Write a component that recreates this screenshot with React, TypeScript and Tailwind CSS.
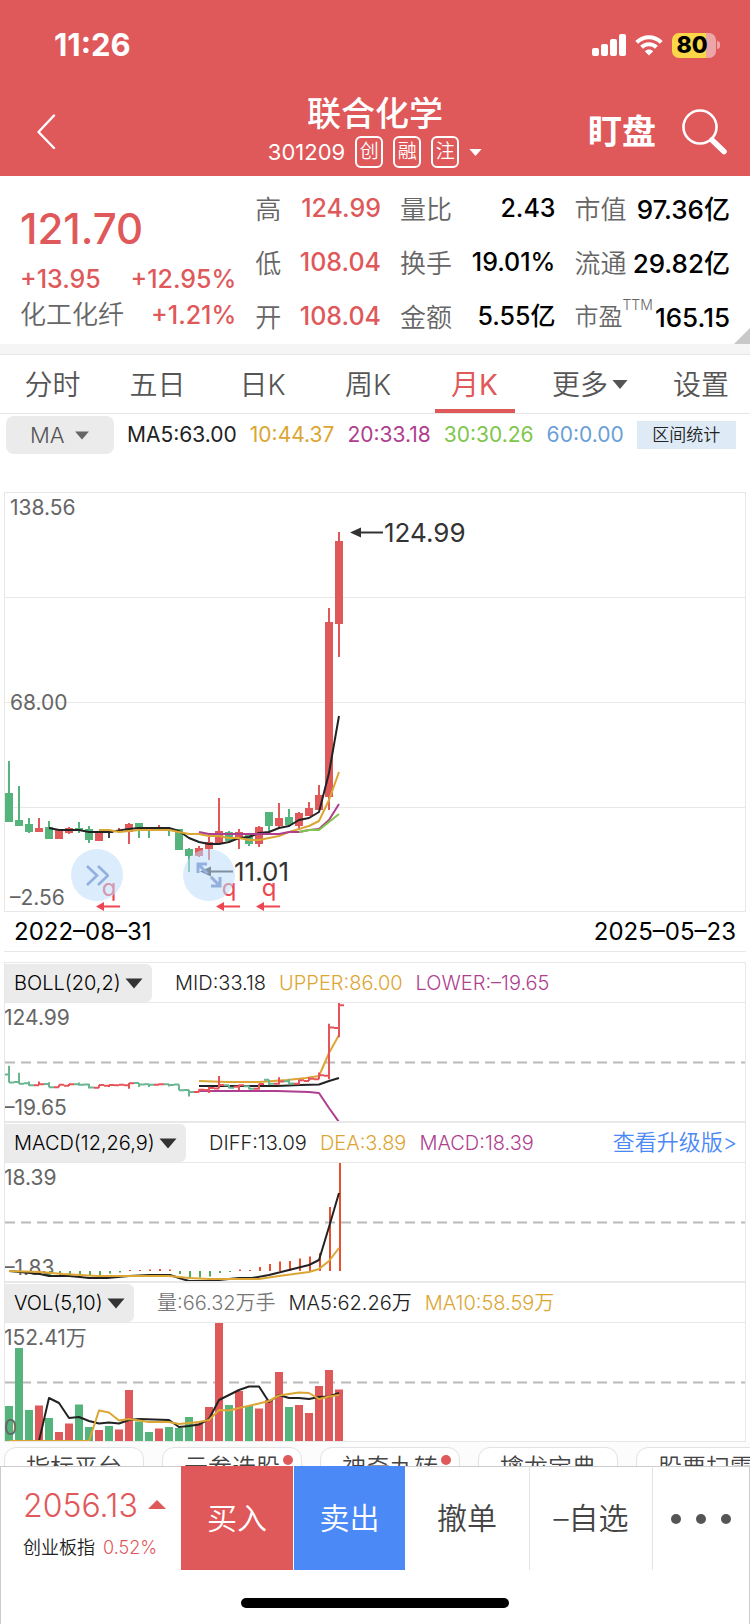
import React, { useState } from 'react';

const RED = '#df585a';
const GREEN = '#55b37c';
const GOLD = '#dba633';
const PURPLE = '#ae3f8f';
const LIME = '#7fc64c';

// [up, high, bodyTop, bodyBottom, low] in chart pixels
type Candle = [boolean, number, number, number, number];

const candles: Candle[] = [
  [false, 268, 300, 329, 329],
  [false, 293, 327, 333, 333],
  [false, 325, 331, 339, 340],
  [true, 325, 335, 339, 339],
  [false, 328, 334, 346, 346],
  [true, 337, 337, 346, 346],
  [true, 334, 335, 340, 341],
  [false, 329, 335, 337, 340],
  [false, 333, 336, 347, 350],
  [true, 338, 338, 348, 348],
  [true, 338, 338, 340, 345],
  [true, 335, 337, 339, 339],
  [true, 330, 331, 339, 351],
  [false, 330, 330, 336, 345],
  [false, 334, 335, 337, 345],
  [true, 332, 335, 337, 337],
  [false, 334, 335, 338, 343],
  [false, 336, 336, 357, 357],
  [false, 355, 356, 363, 379],
  [true, 353, 355, 363, 364],
  [true, 344, 349, 356, 367],
  [true, 305, 338, 350, 350],
  [false, 338, 339, 348, 350],
  [true, 336, 339, 344, 356],
  [false, 340, 342, 351, 353],
  [true, 333, 334, 351, 354],
  [false, 319, 319, 333, 338],
  [true, 310, 325, 333, 336],
  [false, 316, 324, 332, 334],
  [true, 319, 320, 333, 337],
  [true, 309, 315, 323, 323],
  [true, 292, 302, 317, 317],
  [true, 115, 129, 304, 317],
  [true, 39, 48, 131, 164],
];

const macdBars: [number, number][] = [
  [4, 113], [5, 112.5], [6, 112], [7, 112], [8, 112], [9, 112], [10, 110.5], [11, 109.5],
  [12, 107], [13, 107], [14, 106.5], [15, 106], [16, 106.5],
  [17, 111], [18, 115.5], [19, 114.5], [20, 113.5], [21, 110], [22, 109],
  [23, 106.5], [24, 107], [25, 104], [26, 101], [27, 98.5], [28, 98], [29, 95.5],
  [30, 93.5], [31, 90], [32, 44], [33, 0],
];

const volumes: [boolean, number][] = [
  [false, 83], [false, 25], [false, 87], [true, 82.5], [false, 95], [true, 109], [true, 100.5],
  [false, 81.5], [false, 104], [true, 107], [false, 103], [true, 106.5], [true, 67],
  [false, 98.5], [false, 109], [true, 105.5], [false, 104], [false, 105], [false, 94],
  [true, 100.5], [true, 84], [true, 0], [false, 82], [true, 68], [false, 83], [true, 85.5],
  [true, 77], [true, 49], [false, 84], [true, 82], [true, 90], [true, 63], [true, 47], [true, 66.5],
];

const quotes = [
  [['高', '124.99'], ['低', '108.04'], ['开', '108.04']],
  [['量比', '2.43'], ['换手', '19.01%'], ['金额', '5.55亿']],
  [['市值', '97.36亿'], ['流通', '29.82亿'], ['市盈', '165.15']],
];

const valueStyles = [
  'text-[25px] font-medium text-[#df585a]',
  'text-[25px] font-medium text-black',
  'text-[26px] font-medium text-black',
];

const tabs = ['分时', '五日', '日K', '周K', '月K', '更多', '设置'];

const chips = [
  { name: '指标平台', dot: false },
  { name: '云参选股', dot: true },
  { name: '神奇九转', dot: true },
  { name: '擒龙宝典', dot: false },
  { name: '股票扫雷', dot: false },
];

// Candle index to x
const cx = (i: number) => 4 + 10 * i;

// Main chart y to BOLL chart y, both share the same price data
const bollY = (y: number) => y * 0.2754 - 11;

function Line({ points, color }: { points: string; color: string }) {
  return <polyline points={points} fill="none" stroke={color} strokeWidth="2" strokeLinejoin="round" />;
}

function Caret({ className }: { className: string }) {
  return (
    <svg viewBox="0 0 18 11" className={className} fill="currentColor" aria-hidden="true">
      <path d="M0.5 0.5h17L9 10.5z" />
    </svg>
  );
}

function StatusBar() {
  return (
    <div className="flex h-[88px] items-center justify-between pt-[2px] pl-[54px] pr-[30px]">
      <span className="text-[31px] leading-8 font-bold">11:26</span>
      <div className="flex items-center gap-[9px]">
        <svg className="h-[22px] w-[34px]" viewBox="0 0 34 22" fill="#fff" aria-hidden="true">
          <rect x="0" y="14" width="7" height="8" rx="2" />
          <rect x="9" y="10" width="7" height="12" rx="2" />
          <rect x="18" y="5" width="7" height="17" rx="2" />
          <rect x="27" y="0" width="7" height="22" rx="2" />
        </svg>
        <svg className="h-[21px] w-7" viewBox="0 0 28 21" aria-hidden="true">
          <path d="M1.7 7.4C8.6 0.6 19.4 0.6 26.3 7.4" fill="none" stroke="#fff" strokeWidth="4" />
          <path d="M6.6 12.3C10.7 8.3 17.3 8.3 21.4 12.3" fill="none" stroke="#fff" strokeWidth="4" />
          <path d="M14 20.5l-4.2-4.3c2.4-2.2 6-2.2 8.4 0z" fill="#fff" />
        </svg>
        <div className="flex items-center gap-px">
          <div className="flex h-[25px] w-11 items-center justify-center rounded-[7px] bg-linear-to-r from-[#f9d748] from-78% to-[#eda6a8] to-78% pr-1 text-[23px] leading-6 font-extrabold text-black">
            80
          </div>
          <div className="h-2 w-[3px] rounded-r-full bg-[#eda6a8]" />
        </div>
      </div>
    </div>
  );
}

function NavBar() {
  return (
    <div className="grid h-[88px] grid-cols-[1fr_auto_1fr] items-center">
      <button className="ml-[34px] justify-self-start" aria-label="返回">
        <svg className="h-9 w-6" viewBox="0 0 24 36" fill="none" stroke="#fff" strokeWidth="2.4" aria-hidden="true">
          <path d="M20 1.5L4.5 18L20 34" strokeLinecap="round" strokeLinejoin="round" />
        </svg>
      </button>
      <div className="flex flex-col items-center pb-1">
        <h1 className="text-[34px] leading-[44px] font-medium">联合化学</h1>
        <div className="flex h-8 items-center gap-[10px] text-[22px]">
          <span>301209</span>
          {['创', '融', '注'].map((t) => (
            <span key={t} className="flex h-8 w-7 items-center justify-center rounded-md border-2 border-white text-[19px] leading-6 font-[350]">
              {t}
            </span>
          ))}
          <Caret className="h-[9px] w-[13px]" />
        </div>
      </div>
      <div className="flex items-center justify-end gap-[26px] pr-[22px]">
        <button className="text-[34px] leading-10 font-bold">盯盘</button>
        <button aria-label="搜索">
          <svg className="h-[46px] w-[46px]" viewBox="0 0 46 46" fill="none" stroke="#fff" aria-hidden="true">
            <circle cx="18" cy="18" r="16.5" strokeWidth="2.6" />
            <path d="M30 31L42 42.5" strokeWidth="5.5" strokeLinecap="round" />
          </svg>
        </button>
      </div>
    </div>
  );
}

function QuotePanel() {
  return (
    <section className="relative grid grid-cols-[217fr_126fr_156fr_156fr] gap-x-[19px] px-5 pt-[6px] text-[26px]">
      <div className="pt-[15px] text-[#df585a]">
        <div className="text-[42px] leading-[64px] font-medium">121.70</div>
        <div className="flex justify-between text-[25px] leading-9 font-medium">
          <span>+13.95</span>
          <span>+12.95%</span>
        </div>
        <div className="flex justify-between leading-9">
          <span className="font-[350] text-[#666]">化工化纤</span>
          <span className="text-[25px] font-medium">+1.21%</span>
        </div>
      </div>
      {quotes.map((col, c) => (
        <dl key={c}>
          {col.map(([label, value]) => (
            <div key={label} className="flex h-[54px] items-center justify-between whitespace-nowrap">
              <dt className="font-[350] text-[#666]">
                {label === '市盈' ? (
                  <span className="flex items-start">
                    <span className="text-2xl leading-9">市盈</span>
                    <sup className="top-0 text-sm leading-3">TTM</sup>
                  </span>
                ) : (
                  label
                )}
              </dt>
              <dd className={valueStyles[c]}>{value}</dd>
            </div>
          ))}
        </dl>
      ))}
      <svg className="absolute right-0 bottom-0 h-4 w-4" viewBox="0 0 16 16" aria-hidden="true">
        <path d="M16 0v16H0z" fill="#c8c8c8" />
      </svg>
    </section>
  );
}

function PeriodTabs() {
  const [active, setActive] = useState('月K');
  return (
    <nav className="grid h-[60px] grid-cols-[105fr_105fr_105fr_106fr_107fr_124fr_98fr] border-y border-[#e6e6e6] text-[28px]">
      {tabs.map((t) => (
        <button
          key={t}
          onClick={() => setActive(t)}
          className={`relative flex items-center justify-center gap-1 pt-px ${t === active ? 'font-normal text-[#df585a]' : 'font-[350] text-[#555]'}`}
        >
          {t}
          {t === '更多' && <Caret className="h-[11px] w-4" />}
          {t === active && <span className="absolute bottom-0 h-1 w-20 bg-[#df585a]" />}
        </button>
      ))}
    </nav>
  );
}

function MaRow() {
  return (
    <div className="flex h-10 items-center gap-[13px] pl-[6px] pr-[14px] text-[21px] whitespace-nowrap">
      <div className="relative h-[38px] w-[108px] shrink-0">
        <select aria-label="主图指标" className="h-full w-full appearance-none rounded-lg bg-[#ebebeb] pl-6 text-[22px] font-light text-[#555]">
          <option>MA</option>
        </select>
        <Caret className="pointer-events-none absolute top-[15px] right-6 h-[9px] w-4 text-[#666]" />
      </div>
      <span className="text-[#222]">MA5:63.00</span>
      <span className="text-[#dba633]">10:44.37</span>
      <span className="text-[#ae3f8f]">20:33.18</span>
      <span className="text-[#7fc64c]">30:30.26</span>
      <span className="text-[#6a9fd8]">60:0.00</span>
      <button className="ml-auto h-7 min-w-0 flex-[0_1_100px] bg-[#dfeaf7] text-[17px] leading-7 font-[350] text-[#222]">区间统计</button>
    </div>
  );
}

function KLineChart() {
  return (
    <div className="relative mx-1 mt-[37px] border border-[#e8e8e8]">
      <svg className="block h-[418px] w-full" role="img" aria-label="月K线">
        {[104, 209, 314].map((y) => (
          <rect key={y} y={y} width="100%" height="1" fill="#e8e8e8" />
        ))}
        {candles.map(([up, high, top, bottom, low], i) => (
          <g key={i} fill={i === 10 ? '#444' : up ? RED : GREEN}>
            <rect x={cx(i) - 1} y={high} width="2" height={low - high} />
            <rect x={cx(i) - 4} y={top} width="8" height={bottom - top} />
          </g>
        ))}
        <Line color="#222" points="44,335 54,337 74,337 84,339 104,339 124,336 134,335 164,335 174,338 184,345 194,349 204,351 214,351 224,349 234,345 244,344 254,340 264,339 274,335 284,333 294,327 304,325 314,319 324,280 334,223" />
        <Line color={GOLD} points="94,337 104,337 114,339 134,337 164,337 174,339 184,341 194,341 204,343 214,343 224,345 234,345 244,347 254,347 264,345 274,343 284,339 294,336 304,333 314,328 324,307 334,279" />
        <Line color={PURPLE} points="194,339 204,341 274,341 284,339 294,339 304,337 314,336 324,327 334,311" />
        <Line color={LIME} points="294,339 304,337 314,337 334,321" />

        <g fontSize="21" fill="#666">
          <text x="5" y="22">138.56</text>
          <text x="5" y="217">68.00</text>
          <text x="5" y="412">–2.56</text>
        </g>
        <g fill="#333" fontSize="26">
          <path d="M345 39.5l11-5v10z" />
          <rect x="355" y="38.5" width="23" height="2" />
          <text x="379" y="49">124.99</text>
          <path d="M195 378.5l11-5v10z" />
          <rect x="205" y="377.5" width="23" height="2" />
          <text x="229" y="388">11.01</text>
        </g>
        {[104, 224, 264].map((x) => (
          <g key={x} fill="#ee4650">
            <text x={x} y="403" fontSize="24" textAnchor="middle">q</text>
            <path d={`M${x - 13} 413.5l8-4.5v9z`} />
            <rect x={x - 6} y="412.5" width="17" height="2" />
          </g>
        ))}
      </svg>
      <button aria-label="快进" className="absolute top-[356px] left-[66px] flex h-[52px] w-[52px] items-center justify-center rounded-full bg-[#bedcfa]/55">
        <svg className="h-6 w-6" viewBox="0 0 24 24" fill="none" stroke="#93afdd" strokeWidth="2.6" aria-hidden="true">
          <path d="M2 3l10 9.5L2 22M13 3l10 9.5L13 22" />
        </svg>
      </button>
      <button aria-label="全屏" className="absolute top-[356px] left-[178px] flex h-[52px] w-[52px] items-center justify-center rounded-full bg-[#bedcfa]/55">
        <svg className="h-[26px] w-[26px]" viewBox="0 0 26 26" fill="none" stroke="#93afdd" strokeWidth="3" aria-hidden="true">
          <path d="M2 11V2h9M2 2l9.5 9.5M15 15l9 9M24 15v9h-9" />
        </svg>
      </button>
    </div>
  );
}

type PanelProps = {
  name: string;
  label: string;
  legend: [string, string][];
  link?: string;
  children: React.ReactNode;
};

function IndicatorPanel({ name, label, legend, link, children }: PanelProps) {
  return (
    <section className="mx-1 border border-[#e8e8e8]">
      <div className="flex h-10 items-center border-b border-[#e8e8e8] pr-2 text-xl whitespace-nowrap">
        <div className="relative mr-[23px] h-[38px]">
          <select aria-label={label} className="h-full appearance-none rounded-r-md bg-[#ebebeb] pr-[31px] pl-[9px] font-light text-black">
            <option>{name}</option>
          </select>
          <Caret className="pointer-events-none absolute top-[14px] right-[9px] h-[11px] w-[18px] text-[#333]" />
        </div>
        <div className="flex gap-[13px] font-[350]">
          {legend.map(([text, color]) => (
            <span key={text} style={{ color }}>{text}</span>
          ))}
        </div>
        {link && <a href="#upgrade" className="ml-auto text-[22px] font-[350] text-[#4a88f5]">{link}</a>}
      </div>
      <svg className="block h-[118px] w-full" role="img" aria-label={name}>
        <line x1="0" x2="100%" y1="59.5" y2="59.5" stroke="#b9b9b9" strokeWidth="2" strokeDasharray="10 6" />
        {children}
      </svg>
    </section>
  );
}

function BollPanel() {
  return (
    <IndicatorPanel
      name="BOLL(20,2)"
      label="副图指标一"
      legend={[['MID:33.18', '#222'], ['UPPER:86.00', GOLD], ['LOWER:–19.65', PURPLE]]}
    >
      <Line color={GOLD} points="194,78 222,79 254,79 282,77 301,75 314,73 324,50 334,32" />
      <Line color="#222" points="194,83 272,83 295,82 314,81.5 324,78 334,75" />
      <Line color={PURPLE} points="194,88 272,88 304,89 314,90 324,105 334,119" />
      {candles.map(([up, high, top, bottom, low], i) => {
        const open = bollY(up ? bottom : top);
        const close = bollY(up ? top : bottom);
        return (
          <path
            key={i}
            d={`M${cx(i) - 5} ${open}H${cx(i)}M${cx(i)} ${bollY(high)}V${bollY(low)}M${cx(i)} ${close}H${cx(i) + 5}`}
            stroke={up ? '#e5545a' : '#6bb592'}
            strokeWidth="2"
          />
        );
      })}
      <g fontSize="21" fill="#666">
        <text x="-1" y="22">124.99</text>
        <text x="-1" y="112">–19.65</text>
      </g>
    </IndicatorPanel>
  );
}

function MacdPanel() {
  return (
    <IndicatorPanel
      name="MACD(12,26,9)"
      label="副图指标二"
      legend={[['DIFF:13.09', '#222'], ['DEA:3.89', GOLD], ['MACD:18.39', PURPLE]]}
      link="查看升级版>"
    >
      <g fontSize="21" fill="#666">
        <text x="-1" y="22">18.39</text>
        <text x="-1" y="112">–1.83</text>
      </g>
      {macdBars.map(([i, y]) => (
        <rect
          key={i}
          x={cx(i)}
          y={Math.min(y, 108)}
          width="2"
          height={Math.abs(y - 108)}
          fill={y < 108 ? '#e8502e' : '#4fae50'}
        />
      ))}
      <Line color="#222" points="4,108 15,109 35,111 44,113 64,113 75,114 84,115 102,115 124,113 144,112 165,112 174,115 184,118 204,118 214,117 234,115 247,115 264,112 284,107 304,102 314,97 324,64 334,30" />
      <Line color={GOLD} points="4,108 35,109 58,111 92,113 144,113 164,113 184,115 204,116 254,116 274,113 304,109 314,106 324,98 334,85" />
    </IndicatorPanel>
  );
}

function VolPanel() {
  return (
    <IndicatorPanel
      name="VOL(5,10)"
      label="副图指标三"
      legend={[['量:66.32万手', '#777'], ['MA5:62.26万', '#222'], ['MA10:58.59万', GOLD]]}
    >
      {volumes.map(([up, y], i) => (
        <rect key={i} x={cx(i) - 4} y={y} width="8" height={119 - y} fill={up ? RED : GREEN} />
      ))}
      <Line color="#222" points="4,118 34,118 44,75 54,80 64,95 74,94 84,98 94,100.5 104,99.5 114,100.5 124,97 134,96 164,97 174,104 184,103 194,101.5 204,96 214,77 224,72 234,67 244,63.5 254,63.5 264,79 274,72 284,75 294,75 304,76 314,74 324,73.5 334,70" />
      <Line color={GOLD} points="4,118 84,118 94,87.5 104,89.5 114,97.5 124,96 144,99 164,99 174,101 194,99 204,97 214,87 224,87.5 234,85 254,80.5 264,78 274,72.5 294,69.5 304,70 314,76 324,73.5 334,72" />
      <g fontSize="21" fill="#666">
        <text x="-1" y="22">152.41万</text>
        <text x="-1" y="112">0</text>
      </g>
    </IndicatorPanel>
  );
}

function ChipStrip() {
  return (
    <div className="flex h-6 items-start gap-[18px] overflow-hidden bg-[#fcfcfc] pt-[5px] pl-1">
      {chips.map((c) => (
        <button key={c.name} className="relative h-[42px] w-[140px] shrink-0 rounded-xl border border-[#e2e2e2] bg-white text-2xl leading-10 font-[350] text-[#444]">
          {c.name}
          {c.dot && <span className="absolute top-[7px] right-2 h-[10px] w-[10px] rounded-full bg-[#df585a]" />}
        </button>
      ))}
    </div>
  );
}

function TradeBar() {
  return (
    <footer>
      <div className="grid h-[104px] grid-cols-[181fr_112fr_112fr_124fr_123fr_98fr] text-[30px] font-[350] text-[#444]">
        <div className="flex flex-col gap-2 border-t border-l border-[#ccc] pt-[17px] pl-[22px] whitespace-nowrap">
          <div className="flex items-center gap-[10px] text-[#df585a]">
            <span className="text-[32px] leading-[44px]">2056.13</span>
            <svg className="mb-1 h-[9px] w-[18px]" viewBox="0 0 18 9" aria-hidden="true">
              <path d="M9 0l9 9H0z" fill={RED} />
            </svg>
          </div>
          <div className="flex items-center gap-2 text-lg leading-6">
            <span className="text-[#222]">创业板指</span>
            <span className="text-[#df585a]">0.52%</span>
          </div>
        </div>
        <button className="bg-[#df585a] text-white">买入</button>
        <button className="border-l border-white bg-[#4b89f7] text-white">卖出</button>
        <button className="border-t border-[#ccc]">撤单</button>
        <button className="border-t border-l border-t-[#ccc] border-l-[#e4e4e4]">–自选</button>
        <button aria-label="更多操作" className="flex items-center justify-center gap-[15px] border-t border-r border-l border-t-[#ccc] border-r-[#ccc] border-l-[#e4e4e4]">
          <span className="h-[10px] w-[10px] rounded-full bg-[#555]" />
          <span className="h-[10px] w-[10px] rounded-full bg-[#555]" />
          <span className="h-[10px] w-[10px] rounded-full bg-[#555]" />
        </button>
      </div>
      <div className="flex h-[54px] items-end justify-center border-x border-[#ccc] pb-4">
        <div className="h-[10px] w-[268px] rounded-full bg-black" />
      </div>
    </footer>
  );
}

export default function App() {
  return (
    <div className="flex min-h-screen flex-col overflow-hidden bg-white font-['Inter','Noto_Sans_CJK_SC',sans-serif]">
      <header className="bg-[#df585a] text-white">
        <StatusBar />
        <NavBar />
      </header>

      <main className="flex-1">
        <QuotePanel />
        <div className="h-[10px] bg-[#f5f5f5]" />
        <PeriodTabs />
        <div className="pt-[1px]">
          <MaRow />
        </div>
        <KLineChart />
        <div className="mx-1 mb-[10px] flex h-10 items-center justify-between border-b border-[#e8e8e8] px-[10px] text-2xl text-black">
          <time>2022–08–31</time>
          <time>2025–05–23</time>
        </div>
        <BollPanel />
        <MacdPanel />
        <VolPanel />
        <ChipStrip />
      </main>

      <TradeBar />
    </div>
  );
}
